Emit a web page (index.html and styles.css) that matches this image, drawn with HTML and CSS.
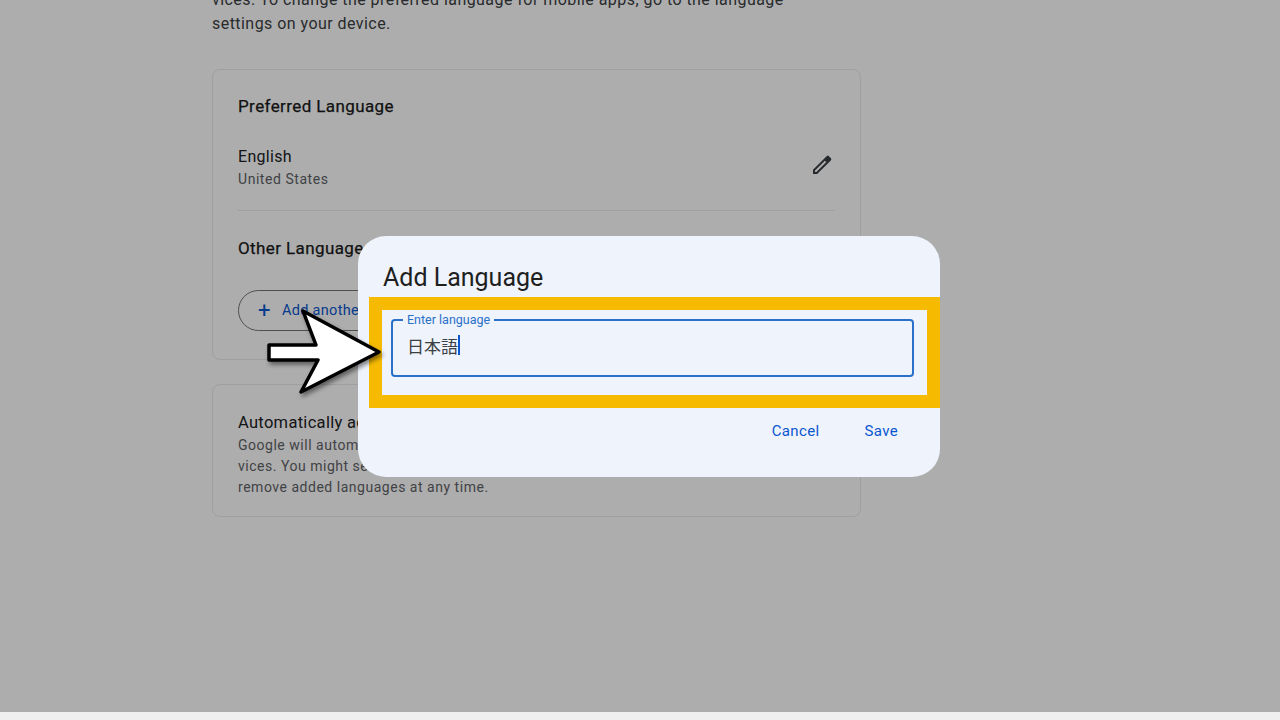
FILE: index.html
```html
<!DOCTYPE html>
<html lang="en">
<head>
<meta charset="utf-8">
<title>Add Language</title>
<link rel="stylesheet" href="styles.css">
</head>
<body>
<div class="stage">
  <main class="page">
    <p class="intro">vices. To change the preferred language for mobile apps, go to the language settings on your device.</p>
    <section class="card card-lang">
      <h2 class="card-title">Preferred Language</h2>
      <div class="lang-row">
        <div>
          <div class="lang-name">English</div>
          <div class="lang-region">United States</div>
        </div>
        <svg class="pencil" width="24" height="24" viewBox="0 0 24 24" aria-hidden="true"><path d="M3 21v-4.2L16.6 3.2a1.6 1.6 0 0 1 2.3 0l1.9 1.9a1.6 1.6 0 0 1 0 2.3L7.2 21H3zm2-2h1.4L16.3 9.1l-1.4-1.4L5 17.6V19z"/></svg>
      </div>
      <div class="rule"></div>
      <h2 class="card-title other">Other Languages</h2>
      <button class="add-btn"><span class="plus">+</span>Add another language</button>
    </section>
    <section class="card card-auto">
      <h2 class="auto-title">Automatically added languages</h2>
      <p class="auto-text">Google will automatically add languages to your Google ser-<br>vices. You might see content in these languages. You can<br>remove added languages at any time.</p>
    </section>
  </main>
  <div class="scrim"></div>
  <div class="dialog">
    <h1 class="dialog-title">Add Language</h1>
    <div class="highlight">
      <div class="field">
        <span class="field-label">Enter language</span>
        <span class="field-value">日本語</span><span class="caret"></span>
      </div>
    </div>
    <div class="actions">
      <button class="text-btn">Cancel</button>
      <button class="text-btn">Save</button>
    </div>
  </div>
  <svg class="arrow" width="130" height="96" viewBox="0 0 130 96" aria-hidden="true">
    <path d="M41 6 L117 47 L39 87 L56 55 L7 55 L7 40 L54 40 Z"/>
  </svg>
</div>
<div class="strip"></div>
</body>
</html>
```
FILE: styles.css
```css
* { box-sizing: border-box; }
html, body { margin: 0; padding: 0; }
body {
  width: 1280px;
  height: 720px;
  overflow: hidden;
  background: #f0f0f0;
  font-family: Roboto, "Noto Sans CJK JP", sans-serif;
}
.stage {
  position: relative;
  height: 712px;
  overflow: hidden;
  background: #fff;
}
.page {
  width: 649px;
  margin-left: 212px;
  margin-top: -12px;
}
.intro {
  margin: 0 0 33px;
  width: 590px;
  font-size: 16px;
  line-height: 24px;
  color: #3c4043;
  letter-spacing: 0.45px;
}
.card {
  border: 1px solid #e8eaed;
  border-radius: 8px;
  padding: 0 25px;
}
.card-lang { height: 291px; padding-top: 26px; margin-bottom: 24px; }
.card-auto { height: 133px; padding-top: 28px; }
.card-title {
  margin: 0;
  font-size: 17px;
  line-height: 20px;
  font-weight: 400;
  color: #1a1a1a;
  -webkit-text-stroke: 0.25px #1a1a1a;
  letter-spacing: 0.4px;
}
.lang-row {
  display: flex;
  justify-content: space-between;
  align-items: center;
  margin-top: 30px;
  height: 44px;
}
.lang-name { font-size: 16px; line-height: 22px; color: #202124; letter-spacing: 0.3px; }
.lang-region { font-size: 14px; line-height: 22px; color: #5f6368; letter-spacing: 0.55px; }
.pencil { fill: #3c4043; margin: -6px 1px 0 0; }
.rule { height: 1px; background: #e8eaed; margin-top: 20px; }
.other { margin-top: 27px; }
.add-btn {
  display: flex;
  align-items: center;
  width: 200px;
  height: 41px;
  margin-top: 32px;
  padding: 0 0 0 19px;
  border: 1px solid #747775;
  border-radius: 21px;
  background: transparent;
  font: 400 14.5px Roboto, sans-serif;
  letter-spacing: 0.3px;
  color: #0b57d0;
}
.plus { font-size: 22px; font-weight: 400; width: 24px; text-align: left; }
.auto-title { margin: 0; font-size: 16.5px; line-height: 20px; font-weight: 400; color: #202124; letter-spacing: 0.3px; }
.auto-text { margin: 2px 0 0; width: 600px; font-size: 14px; line-height: 21px; color: #5f6368; letter-spacing: 0.52px; }
.scrim {
  position: absolute;
  inset: 0;
  background: rgba(0, 0, 0, 0.32);
}
.dialog {
  position: absolute;
  left: 358px;
  top: 236px;
  width: 582px;
  height: 241px;
  border-radius: 28px;
  background: #eef3fc;
  padding-top: 27px;
}
.dialog-title {
  margin: 0 0 0 25px;
  font-size: 25px;
  line-height: 29px;
  font-weight: 400;
  color: #1f1f1f;
}
.highlight {
  margin: 5px 0 0 11px;
  height: 111px;
  border: 13px solid #f6bb00;
  padding: 9px 13px 0 9px;
}
.field {
  position: relative;
  height: 58px;
  border: 2px solid #2b70c9;
  border-radius: 4px;
  display: flex;
  align-items: center;
  padding: 0 0 6px 14px;
}
.field-label {
  position: absolute;
  left: 10px;
  top: -9px;
  padding: 0 4px;
  background: #eef3fc;
  font-size: 12.5px;
  line-height: 16px;
  color: #2b70c9;
}
.field-value { font-size: 17px; color: #3c4043; font-family: "Noto Sans CJK JP", sans-serif; }
.caret { width: 1.5px; height: 20px; background: #0b57d0; }
.actions {
  display: flex;
  justify-content: flex-end;
  gap: 45px;
  padding: 13px 42px 0 0;
}
.text-btn {
  border: 0;
  padding: 0;
  background: none;
  font: 400 15px/20px Roboto, sans-serif;
  letter-spacing: 0.35px;
  color: #0b57d0;
}
.arrow {
  position: absolute;
  left: 262px;
  top: 305px;
  filter: drop-shadow(2px 3px 2px rgba(0, 0, 0, 0.45));
}
.arrow path { fill: #fff; stroke: #000; stroke-width: 3.5; stroke-linejoin: round; }
.strip { height: 8px; background: #f0f0f0; }
```
